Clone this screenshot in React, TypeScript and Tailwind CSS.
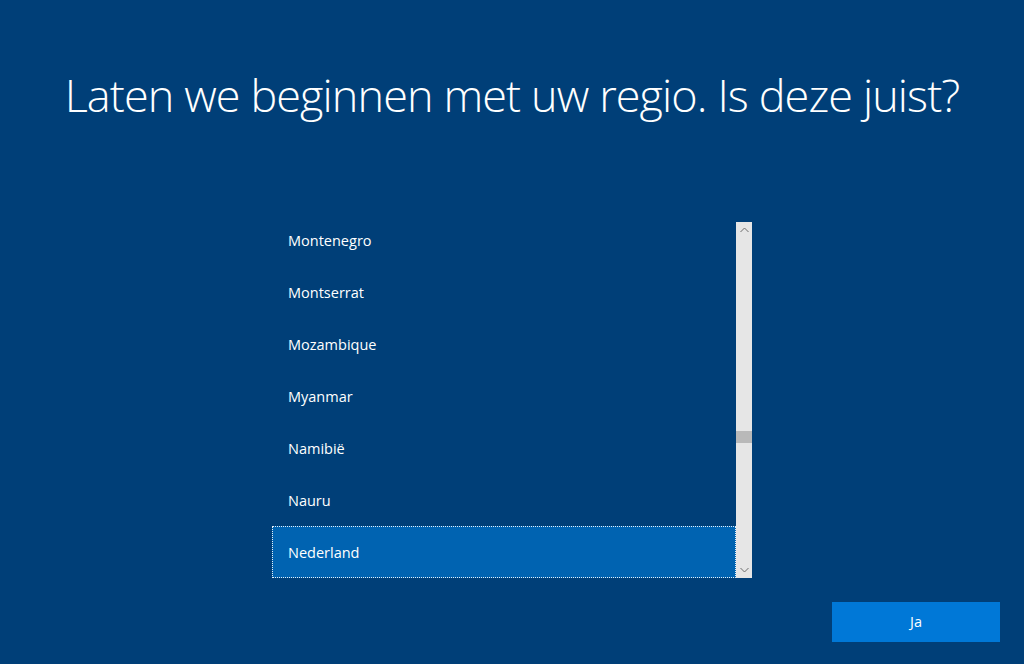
const COUNTRIES = [
  "Montenegro",
  "Montserrat",
  "Mozambique",
  "Myanmar",
  "Namibië",
  "Nauru",
  "Nederland",
];

const SELECTED = "Nederland";

function ChevronUp() {
  return (
    <svg width="9" height="6" viewBox="0 0 9 6" className="block">
      <path d="M0.5 5L4.5 1L8.5 5" fill="none" stroke="#6d6d6d" strokeWidth="1" />
    </svg>
  );
}

function ChevronDown() {
  return (
    <svg width="9" height="6" viewBox="0 0 9 6" className="block">
      <path d="M0.5 1L4.5 5L8.5 1" fill="none" stroke="#6d6d6d" strokeWidth="1" />
    </svg>
  );
}

export default function App() {
  return (
    <main
      className="flex flex-col h-[664px] w-full bg-[#003f78] text-white overflow-hidden"
      style={{ fontFamily: '"Open Sans", "Noto Sans", sans-serif' }}
    >
      {/* Title */}
      <h1 className="mt-[65px] text-center text-[45px] leading-[60px] font-light tracking-[-0.9px]">
        Laten we beginnen met uw regio. Is deze juist?
      </h1>

      {/* Region list */}
      <div className="mx-auto mt-[97px] flex w-[480px] h-[356px]">
        <div className="flex-1 overflow-hidden">
          <ul className="-mt-[8px]">
            {COUNTRIES.map((name) => (
              <li
                key={name}
                className={
                  name === SELECTED
                    ? "flex h-[52px] items-center pl-[15px] pt-px text-[14.5px] bg-[#0063b1] border border-dotted border-white/90"
                    : "flex h-[52px] items-center pl-4 pt-[2px] text-[14.5px]"
                }
              >
                {name}
              </li>
            ))}
          </ul>
        </div>

        {/* Scrollbar */}
        <div className="flex w-[16px] flex-col bg-[#e6e6e6]">
          <div className="flex h-[16px] items-center justify-center">
            <ChevronUp />
          </div>
          <div className="flex-1 pt-[193px]">
            <div className="h-[12px] bg-[#b9b9b9]" />
          </div>
          <div className="flex h-[16px] items-center justify-center">
            <ChevronDown />
          </div>
        </div>
      </div>

      {/* Footer */}
      <div className="mt-auto mb-[22px] flex justify-end pr-6">
        <button className="h-[40px] w-[168px] bg-[#0078d7] text-[14.5px] text-white">
          Ja
        </button>
      </div>
    </main>
  );
}
